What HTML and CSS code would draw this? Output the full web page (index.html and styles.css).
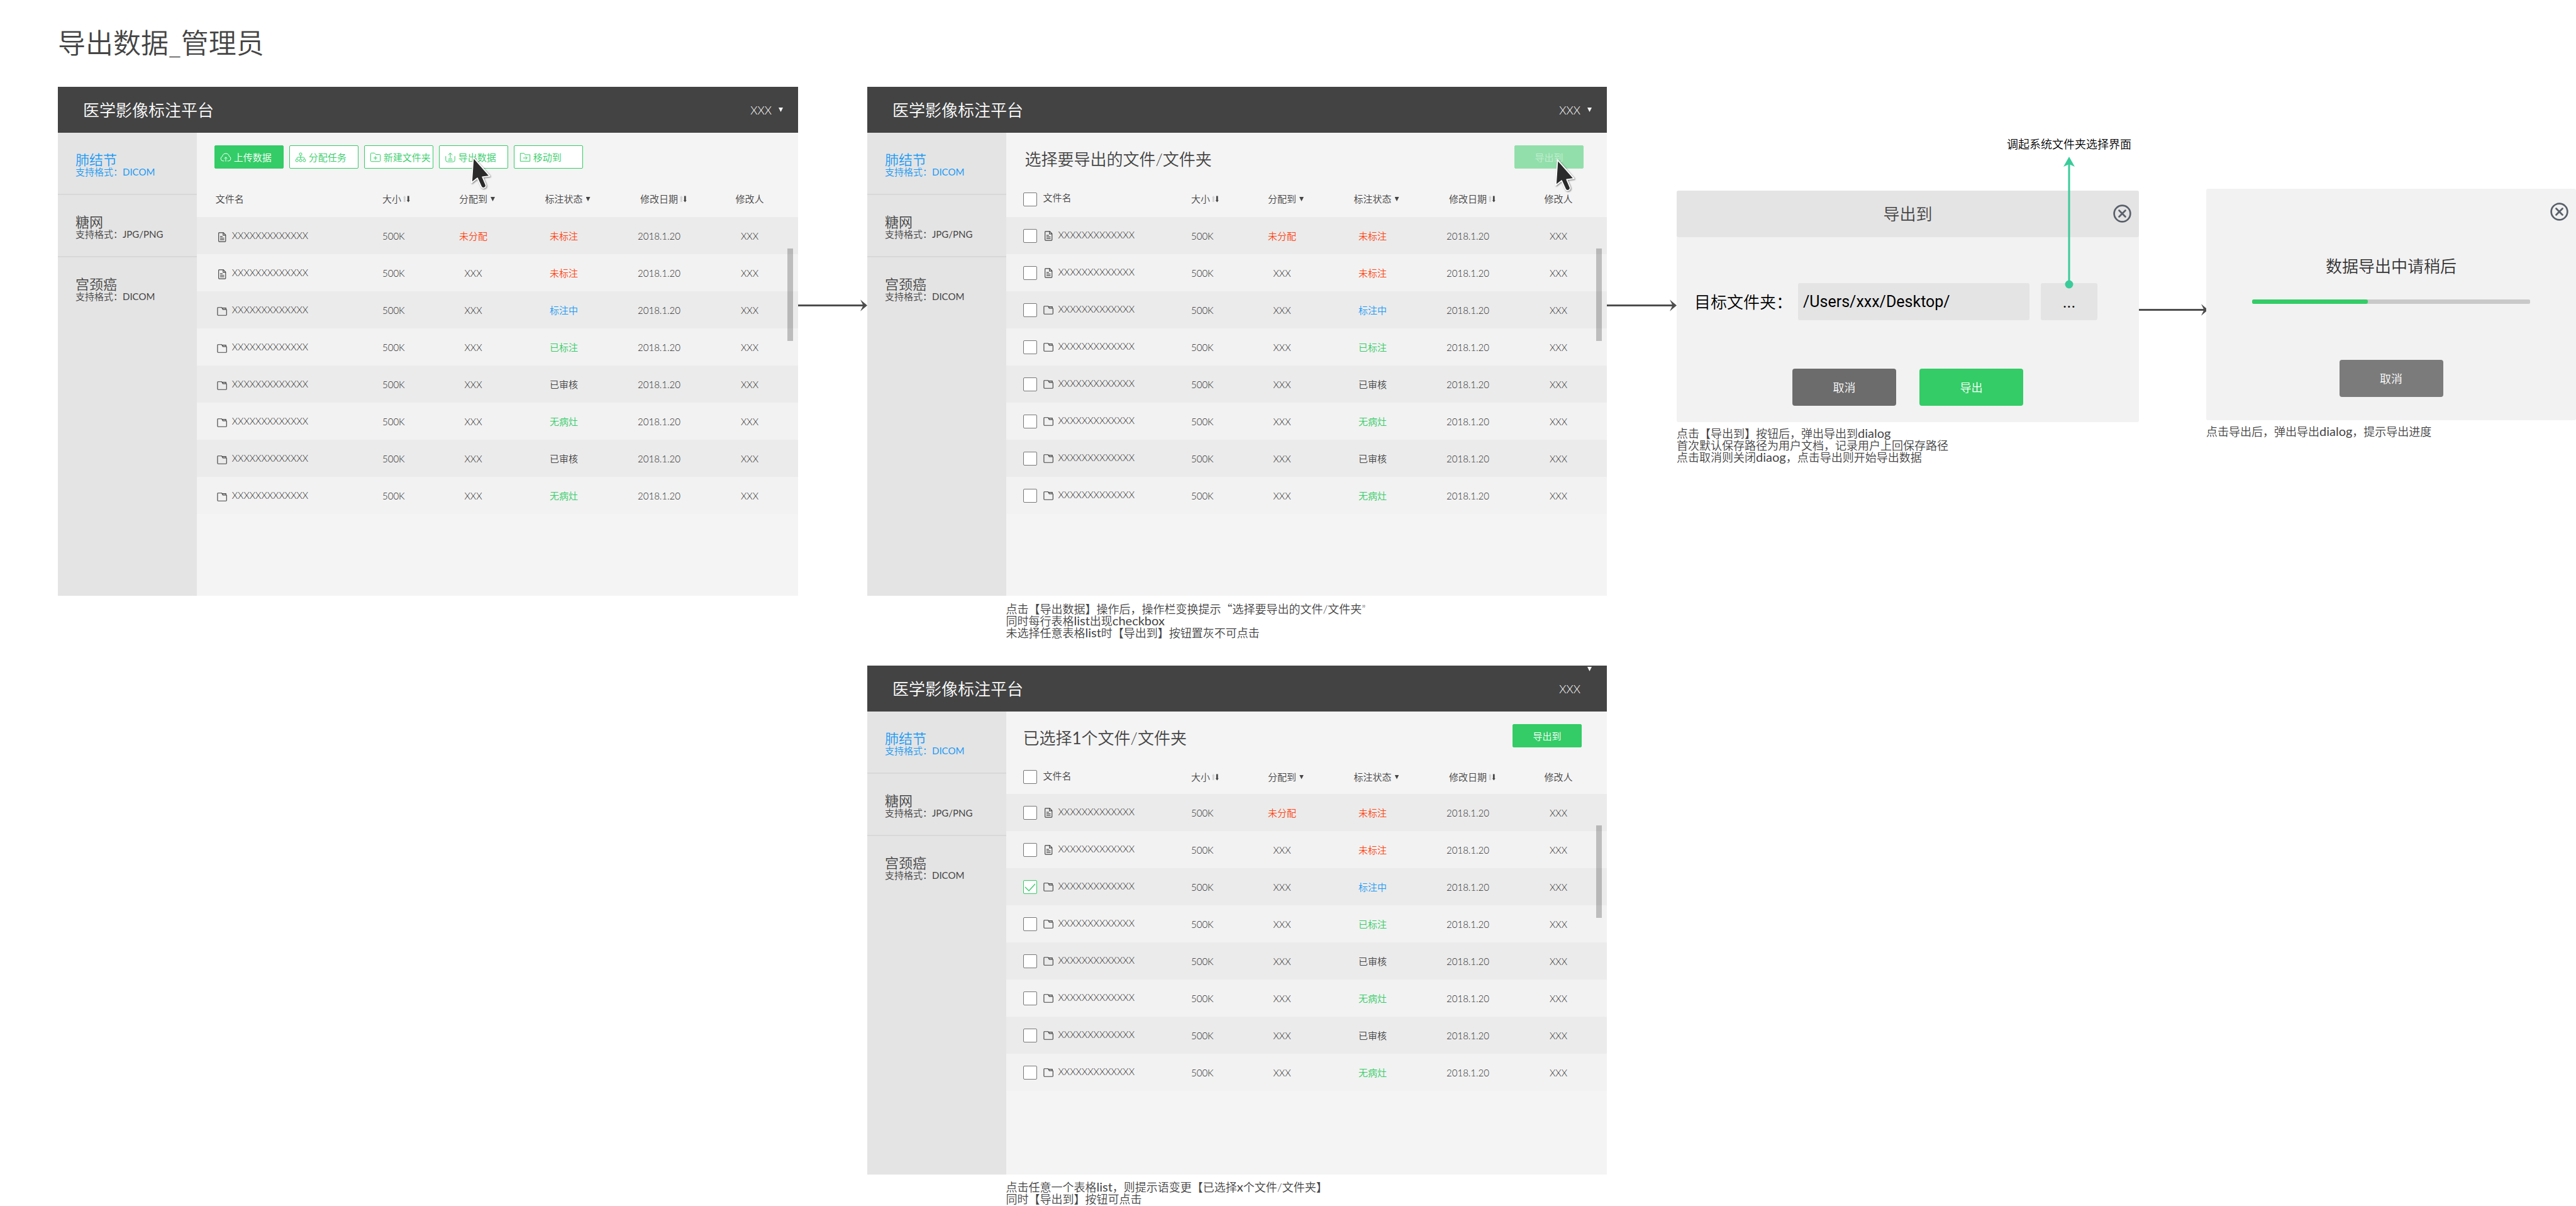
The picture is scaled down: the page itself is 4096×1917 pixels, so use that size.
FILE: index.html
```html
<!DOCTYPE html>
<html lang="zh-CN">
<head>
<meta charset="utf-8">
<title>导出数据_管理员</title>
<link rel="stylesheet" href="styles.css">
</head>
<body>
<svg class="sprite" aria-hidden="true">
  <symbol id="i-upload" viewBox="0 0 20 20"><path d="M7 16.500H4.800A4.200 4.200 0 0 1 4 8.400A6.100 6.100 0 0 1 16 8.400A4.200 4.200 0 0 1 15.200 16.500H13M10 17.500V10M7.300 12.300L10 9.700L12.700 12.300"/></symbol>
  <symbol id="i-assign" viewBox="0 0 20 20"><circle cx="10" cy="4.500" r="2.300"/><circle cx="3.500" cy="15.500" r="2.300"/><circle cx="10" cy="15.500" r="2.300"/><circle cx="16.500" cy="15.500" r="2.300"/><path d="M10 7V13M3.500 13V11.500Q3.500 10 5 10H15Q16.500 10 16.500 11.500V13"/></symbol>
  <symbol id="i-folder-add" viewBox="0 0 20 20"><path d="M1.500 4A1.500 1.500 0 0 1 3 2.500H8L10.500 5H17A1.500 1.500 0 0 1 18.500 6.500V16A1.500 1.500 0 0 1 17 17.500H3A1.500 1.500 0 0 1 1.500 16ZM10 8V14.500M6.700 11.200H13.300"/></symbol>
  <symbol id="i-export" viewBox="0 0 20 20"><path d="M2 8V15A3 3 0 0 0 5 18H15A3 3 0 0 0 18 15V8M10 11V2.500M6.500 6L10 2.500L13.500 6M7 12.500H13M6 15H14"/></symbol>
  <symbol id="i-move" viewBox="0 0 20 20"><path d="M1.500 17V3H8L10 5.500H18.500V17ZM6.500 11.200H13.500M10.700 8.200L13.700 11.200L10.700 14.200"/></symbol>
  <symbol id="i-doc" viewBox="0 0 18 18"><path d="M4 1H11.500L15.500 5V16A1 1 0 0 1 14.500 17H4A1 1 0 0 1 3 16V2A1 1 0 0 1 4 1ZM11 1V5.500H15.500M5.500 8H10M5.500 10.700H13M5.500 13.300H13"/></symbol>
  <symbol id="i-folder" viewBox="0 0 18 18"><path d="M1 3Q1 2 2 2H8.500L10.500 5.500H16.300Q17.200 5.500 17.200 6.300V15Q17.200 16 16.200 16H2Q1 16 1 15ZM9 3H16V5.500"/></symbol>
  <symbol id="i-sort" viewBox="0 0 14 12"><path fill="#d2d2d2" d="M3.500 0L6 3.500H5V11H2V3.500H1Z"/><path fill="#444" d="M8.500 0.500H11.500V8H12.700L10 11.500L7.300 8H8.500Z"/></symbol>
  <symbol id="i-close" viewBox="0 0 32 32"><circle cx="16" cy="16" r="14.200" fill="none" stroke="#59606b" stroke-width="3"/><path d="M10.500 10.500L21.500 21.500M21.500 10.500L10.500 21.500" fill="none" stroke="#59606b" stroke-width="3" stroke-linecap="round"/></symbol>
  <symbol id="i-cursor" viewBox="0 0 36 56"><path d="M5 2L2 46L12 38L18.500 52.500A4.300 4.300 0 0 0 26.500 49L21 36L33.500 34.500Z" fill="#2b2b2b" stroke="#fff" stroke-width="2" stroke-linejoin="round"/></symbol>
</svg>

<h1 class="page-title">导出数据_管理员</h1>

<main class="board">
  <section class="step">
    <div class="frame">
      <header class="topbar"><span class="brand">医学影像标注平台</span><span class="user">XXX<i class="caret"></i></span></header>
      <nav class="sidebar">
        <a class="cat active" href="#lung"><b>肺结节</b><small>支持格式：<span class="fmt">DICOM</span></small></a>
        <a class="cat" href="#retina"><b>糖网</b><small>支持格式：<span class="fmt">JPG/PNG</span></small></a>
        <a class="cat" href="#cervix"><b>宫颈癌</b><small>支持格式：<span class="fmt">DICOM</span></small></a>
      </nav>
      <div class="content">
        <div class="toolbar actions">
          <button class="btn solid"><svg><use href="#i-upload"/></svg>上传数据</button>
          <button class="btn"><svg><use href="#i-assign"/></svg>分配任务</button>
          <button class="btn"><svg><use href="#i-folder-add"/></svg>新建文件夹</button>
          <span class="hover-spot">
            <button class="btn"><svg><use href="#i-export"/></svg>导出数据</button>
            <svg class="cursor"><use href="#i-cursor"/></svg>
          </span>
          <button class="btn"><svg><use href="#i-move"/></svg>移动到</button>
        </div>
        <div class="list">
          <table class="files">
            <colgroup><col><col class="c-size"><col class="c-assign"><col class="c-status"><col class="c-date"><col class="c-user"></colgroup>
            <thead><tr><th class="name">文件名</th><th class="size">大小<svg class="sort"><use href="#i-sort"/></svg></th><th>分配到<i class="caret"></i></th><th>标注状态<i class="caret"></i></th><th>修改日期<svg class="sort"><use href="#i-sort"/></svg></th><th>修改人</th></tr></thead>
            <tbody>
              <tr><td class="name"><svg><use href="#i-doc"/></svg>XXXXXXXXXXXXX</td><td class="size">500K</td><td class="cn red">未分配</td><td class="cn red">未标注</td><td>2018.1.20</td><td>XXX</td></tr>
              <tr><td class="name"><svg><use href="#i-doc"/></svg>XXXXXXXXXXXXX</td><td class="size">500K</td><td>XXX</td><td class="cn red">未标注</td><td>2018.1.20</td><td>XXX</td></tr>
              <tr><td class="name"><svg><use href="#i-folder"/></svg>XXXXXXXXXXXXX</td><td class="size">500K</td><td>XXX</td><td class="cn blue">标注中</td><td>2018.1.20</td><td>XXX</td></tr>
              <tr><td class="name"><svg><use href="#i-folder"/></svg>XXXXXXXXXXXXX</td><td class="size">500K</td><td>XXX</td><td class="cn green">已标注</td><td>2018.1.20</td><td>XXX</td></tr>
              <tr><td class="name"><svg><use href="#i-folder"/></svg>XXXXXXXXXXXXX</td><td class="size">500K</td><td>XXX</td><td class="cn">已审核</td><td>2018.1.20</td><td>XXX</td></tr>
              <tr><td class="name"><svg><use href="#i-folder"/></svg>XXXXXXXXXXXXX</td><td class="size">500K</td><td>XXX</td><td class="cn green">无病灶</td><td>2018.1.20</td><td>XXX</td></tr>
              <tr><td class="name"><svg><use href="#i-folder"/></svg>XXXXXXXXXXXXX</td><td class="size">500K</td><td>XXX</td><td class="cn">已审核</td><td>2018.1.20</td><td>XXX</td></tr>
              <tr><td class="name"><svg><use href="#i-folder"/></svg>XXXXXXXXXXXXX</td><td class="size">500K</td><td>XXX</td><td class="cn green">无病灶</td><td>2018.1.20</td><td>XXX</td></tr>
            </tbody>
          </table>
          <div class="scroll-thumb"></div>
        </div>
      </div>
    </div>
  </section>

  <div class="flow"><svg viewBox="0 0 12 20"><path d="M0 0L12 10L0 20L5 10Z"/></svg></div>

  <section class="step">
    <div class="frame">
      <header class="topbar"><span class="brand">医学影像标注平台</span><span class="user">XXX<i class="caret"></i></span></header>
      <nav class="sidebar">
        <a class="cat active" href="#lung"><b>肺结节</b><small>支持格式：<span class="fmt">DICOM</span></small></a>
        <a class="cat" href="#retina"><b>糖网</b><small>支持格式：<span class="fmt">JPG/PNG</span></small></a>
        <a class="cat" href="#cervix"><b>宫颈癌</b><small>支持格式：<span class="fmt">DICOM</span></small></a>
      </nav>
      <div class="content">
        <div class="toolbar">
          <h2>选择要导出的文件/文件夹</h2>
          <span class="hover-spot">
            <button class="btn submit" disabled>导出到</button>
            <svg class="cursor low"><use href="#i-cursor"/></svg>
          </span>
        </div>
        <div class="list">
          <table class="files">
            <colgroup><col><col class="c-size"><col class="c-assign"><col class="c-status"><col class="c-date"><col class="c-user"></colgroup>
            <thead><tr><th class="name pick"><input type="checkbox" aria-label="全选">文件名</th><th class="size">大小<svg class="sort"><use href="#i-sort"/></svg></th><th>分配到<i class="caret"></i></th><th>标注状态<i class="caret"></i></th><th>修改日期<svg class="sort"><use href="#i-sort"/></svg></th><th>修改人</th></tr></thead>
            <tbody>
              <tr><td class="name pick"><label><input type="checkbox"><svg><use href="#i-doc"/></svg>XXXXXXXXXXXXX</label></td><td class="size">500K</td><td class="cn red">未分配</td><td class="cn red">未标注</td><td>2018.1.20</td><td>XXX</td></tr>
              <tr><td class="name pick"><label><input type="checkbox"><svg><use href="#i-doc"/></svg>XXXXXXXXXXXXX</label></td><td class="size">500K</td><td>XXX</td><td class="cn red">未标注</td><td>2018.1.20</td><td>XXX</td></tr>
              <tr><td class="name pick"><label><input type="checkbox"><svg><use href="#i-folder"/></svg>XXXXXXXXXXXXX</label></td><td class="size">500K</td><td>XXX</td><td class="cn blue">标注中</td><td>2018.1.20</td><td>XXX</td></tr>
              <tr><td class="name pick"><label><input type="checkbox"><svg><use href="#i-folder"/></svg>XXXXXXXXXXXXX</label></td><td class="size">500K</td><td>XXX</td><td class="cn green">已标注</td><td>2018.1.20</td><td>XXX</td></tr>
              <tr><td class="name pick"><label><input type="checkbox"><svg><use href="#i-folder"/></svg>XXXXXXXXXXXXX</label></td><td class="size">500K</td><td>XXX</td><td class="cn">已审核</td><td>2018.1.20</td><td>XXX</td></tr>
              <tr><td class="name pick"><label><input type="checkbox"><svg><use href="#i-folder"/></svg>XXXXXXXXXXXXX</label></td><td class="size">500K</td><td>XXX</td><td class="cn green">无病灶</td><td>2018.1.20</td><td>XXX</td></tr>
              <tr><td class="name pick"><label><input type="checkbox"><svg><use href="#i-folder"/></svg>XXXXXXXXXXXXX</label></td><td class="size">500K</td><td>XXX</td><td class="cn">已审核</td><td>2018.1.20</td><td>XXX</td></tr>
              <tr><td class="name pick"><label><input type="checkbox"><svg><use href="#i-folder"/></svg>XXXXXXXXXXXXX</label></td><td class="size">500K</td><td>XXX</td><td class="cn green">无病灶</td><td>2018.1.20</td><td>XXX</td></tr>
            </tbody>
          </table>
          <div class="scroll-thumb"></div>
        </div>
      </div>
    </div>
    <p class="note indented">点击【导出数据】操作后，操作栏变换提示<span class="cjk">“</span>选择要导出的文件/文件夹”<br>同时每行表格<span class="lat">list</span>出现<span class="lat">checkbox</span><br>未选择任意表格<span class="lat">list</span>时【导出到】按钮置灰不可点击</p>

    <div class="frame selected">
      <header class="topbar"><span class="brand">医学影像标注平台</span><span class="user">XXX<i class="caret"></i></span></header>
      <nav class="sidebar">
        <a class="cat active" href="#lung"><b>肺结节</b><small>支持格式：<span class="fmt">DICOM</span></small></a>
        <a class="cat" href="#retina"><b>糖网</b><small>支持格式：<span class="fmt">JPG/PNG</span></small></a>
        <a class="cat" href="#cervix"><b>宫颈癌</b><small>支持格式：<span class="fmt">DICOM</span></small></a>
      </nav>
      <div class="content">
        <div class="toolbar">
          <h2>已选择<span class="fmt">1</span>个文件/文件夹</h2>
          <button class="btn solid submit">导出到</button>
        </div>
        <div class="list">
          <table class="files">
            <colgroup><col><col class="c-size"><col class="c-assign"><col class="c-status"><col class="c-date"><col class="c-user"></colgroup>
            <thead><tr><th class="name pick"><input type="checkbox" aria-label="全选">文件名</th><th class="size">大小<svg class="sort"><use href="#i-sort"/></svg></th><th>分配到<i class="caret"></i></th><th>标注状态<i class="caret"></i></th><th>修改日期<svg class="sort"><use href="#i-sort"/></svg></th><th>修改人</th></tr></thead>
            <tbody>
              <tr><td class="name pick"><label><input type="checkbox"><svg><use href="#i-doc"/></svg>XXXXXXXXXXXXX</label></td><td class="size">500K</td><td class="cn red">未分配</td><td class="cn red">未标注</td><td>2018.1.20</td><td>XXX</td></tr>
              <tr><td class="name pick"><label><input type="checkbox"><svg><use href="#i-doc"/></svg>XXXXXXXXXXXXX</label></td><td class="size">500K</td><td>XXX</td><td class="cn red">未标注</td><td>2018.1.20</td><td>XXX</td></tr>
              <tr><td class="name pick"><label><input type="checkbox" checked><svg><use href="#i-folder"/></svg>XXXXXXXXXXXXX</label></td><td class="size">500K</td><td>XXX</td><td class="cn blue">标注中</td><td>2018.1.20</td><td>XXX</td></tr>
              <tr><td class="name pick"><label><input type="checkbox"><svg><use href="#i-folder"/></svg>XXXXXXXXXXXXX</label></td><td class="size">500K</td><td>XXX</td><td class="cn green">已标注</td><td>2018.1.20</td><td>XXX</td></tr>
              <tr><td class="name pick"><label><input type="checkbox"><svg><use href="#i-folder"/></svg>XXXXXXXXXXXXX</label></td><td class="size">500K</td><td>XXX</td><td class="cn">已审核</td><td>2018.1.20</td><td>XXX</td></tr>
              <tr><td class="name pick"><label><input type="checkbox"><svg><use href="#i-folder"/></svg>XXXXXXXXXXXXX</label></td><td class="size">500K</td><td>XXX</td><td class="cn green">无病灶</td><td>2018.1.20</td><td>XXX</td></tr>
              <tr><td class="name pick"><label><input type="checkbox"><svg><use href="#i-folder"/></svg>XXXXXXXXXXXXX</label></td><td class="size">500K</td><td>XXX</td><td class="cn">已审核</td><td>2018.1.20</td><td>XXX</td></tr>
              <tr><td class="name pick"><label><input type="checkbox"><svg><use href="#i-folder"/></svg>XXXXXXXXXXXXX</label></td><td class="size">500K</td><td>XXX</td><td class="cn green">无病灶</td><td>2018.1.20</td><td>XXX</td></tr>
            </tbody>
          </table>
          <div class="scroll-thumb"></div>
        </div>
      </div>
    </div>
    <p class="note indented">点击任意一个表格<span class="lat">list</span>，则提示语变更【已选择<span class="lat">x</span>个文件/文件夹】<br>同时【导出到】按钮可点击</p>
  </section>

  <div class="flow"><svg viewBox="0 0 12 20"><path d="M0 0L12 10L0 20L5 10Z"/></svg></div>

  <section class="step dialog-step">
    <div class="dialog">
      <header class="dialog-head"><span>导出到</span><button class="close" aria-label="关闭"><svg><use href="#i-close"/></svg></button></header>
      <div class="path-row">
        <label for="target">目标文件夹：</label>
        <input id="target" type="text" value="/Users/xxx/Desktop/">
        <span class="browse">
          <button class="more">...</button>
          <span class="callout">调起系统文件夹选择界面
            <svg viewBox="0 0 18 210"><path d="M9 0L18 16L9 12L0 16Z"/><path d="M7.500 9H10.500V203H7.500Z"/><circle cx="9" cy="203" r="6.500"/></svg>
          </span>
        </span>
      </div>
      <div class="dialog-actions"><button class="big">取消</button><button class="big go">导出</button></div>
    </div>
    <p class="note">点击【导出到】按钮后，弹出导出到<span class="lat">dialog</span><br>首次默认保存路径为用户文档，记录用户上回保存路径<br>点击取消则关闭<span class="lat">diaog</span>，点击导出则开始导出数据</p>
  </section>

  <div class="flow lower"><svg viewBox="0 0 12 20"><path d="M0 0L12 10L0 20L5 10Z"/></svg></div>

  <section class="step progress-step">
    <div class="dialog progress-dialog">
      <button class="close" aria-label="关闭"><svg><use href="#i-close"/></svg></button>
      <label for="export-progress">数据导出中请稍后</label>
      <progress id="export-progress" value="5" max="12"></progress>
      <button class="big muted">取消</button>
    </div>
    <p class="note">点击导出后，弹出导出<span class="lat">dialog</span>，提示导出进度</p>
  </section>
</main>
</body>
</html>
```
FILE: styles.css
```css
* { box-sizing: border-box; }

body {
  margin: 0;
  background: #fff;
  color: #444;
  font: 350 15px/20px Lato, "Noto Sans CJK SC", sans-serif;
}

button, input {
  font: inherit;
  color: inherit;
  margin: 0;
}

.sprite { display: none; }

.page-title {
  margin: 0;
  padding: 38px 92px 40px;
  font-size: 44px;
  line-height: 60px;
  font-weight: 350;
}

/* Columns: step, arrow, step, arrow, dialog, arrow, dialog */
.board {
  display: grid;
  grid-template-columns: 1177fr 110fr 1176fr 111fr 735fr 107fr 588fr;
  align-items: start;
  padding-left: 92px;
}

.step { min-width: 0; }

/* Arrows between steps */
.flow {
  display: flex;
  align-items: center;
  margin-top: 338px;
}
.flow.lower { margin: 345px -3px 0 0; }
.flow::before {
  content: "";
  flex: 1;
  height: 3px;
  margin-right: -8px;
  background: #4d4d4d;
}
.flow svg {
  width: 11px;
  height: 19px;
  fill: #4d4d4d;
}

/* Application frame */
.frame {
  display: grid;
  grid-template-columns: 3fr 13fr;
}
.topbar {
  grid-column: 1 / -1;
  display: flex;
  align-items: center;
  justify-content: space-between;
  height: 73px;
  padding: 0 24px 0 40px;
  background: #434343;
  color: #fff;
}
.brand { font-size: 26px; }
.user {
  display: flex;
  align-items: center;
  align-self: stretch;
  gap: 6px;
  font-size: 18px;
}
.caret {
  display: inline-block;
  width: 7px;
  height: 7px;
  margin: 0 -12px 0 5px;
  vertical-align: 2px;
  background: currentColor;
  clip-path: polygon(0 0, 100% 0, 50% 100%);
}
.user .caret { margin-right: 0; }
.selected .user .caret {
  align-self: flex-start;
  margin-top: 2px;
}

.sidebar { background: #e4e4e4; }
.cat {
  display: flex;
  flex-direction: column;
  height: 99px;
  padding: 33px 0 0 28px;
  border-bottom: 2px solid #d8d8d8;
  color: inherit;
  text-decoration: none;
}
.cat:last-child { border-bottom: 0; }
.cat.active { color: #1c9af5; }
.cat b {
  font-size: 22px;
  line-height: 20px;
  font-weight: 350;
}
.cat small {
  font-size: 15px;
  line-height: 18px;
}
.fmt { font-weight: 400; }

.content {
  background: #f4f4f4;
  padding-bottom: 130px;
}
.selected .content { padding-bottom: 133px; }

.toolbar {
  display: flex;
  justify-content: space-between;
  align-items: flex-start;
  height: 76px;
  padding: 20px 37px 0 30px;
}
.selected .toolbar { padding: 20px 40px 0 27px; }
.toolbar h2 {
  margin: 0;
  font-size: 26px;
  line-height: 44px;
  font-weight: 350;
}
.toolbar.actions {
  justify-content: flex-start;
  gap: 9px;
  padding-left: 28px;
}
.btn {
  display: flex;
  align-items: center;
  gap: 4px;
  width: 110px;
  height: 37px;
  padding: 0 0 0 8px;
  border: 1px solid #33cc66;
  border-radius: 2px;
  background: #fff;
  color: #33cc66;
  white-space: nowrap;
}
.btn svg {
  flex: none;
  width: 18px;
  height: 18px;
  fill: none;
  stroke: currentColor;
  stroke-width: 1.1;
}
.btn.solid {
  background: #33cc66;
  color: #fff;
}
.btn.submit {
  justify-content: center;
  padding: 0;
}
.btn:disabled {
  background: #92dfab;
  border-color: #92dfab;
  color: #c3eecf;
}
.hover-spot { position: relative; }
.cursor {
  position: absolute;
  left: 50px;
  top: 17px;
  width: 33px;
  height: 52px;
  filter: drop-shadow(1px 1px 1px rgba(0, 0, 0, .5));
}
.cursor.low {
  left: 64px;
  top: 21px;
}

/* File table */
.list { position: relative; }
.files {
  width: 100%;
  table-layout: fixed;
  border-collapse: collapse;
}
.c-size { width: 73px; }
.c-assign { width: 143px; }
.c-status { width: 145px; }
.c-date { width: 158px; }
.c-user { width: 142px; }
th, td {
  height: 59px;
  padding: 0;
  text-align: center;
}
th {
  height: 58px;
  font-weight: 350;
}
td {
  font-weight: 300;
  color: #2b2b2b;
}
td:last-child, th:last-child { padding-right: 12px; }
.selected th { height: 55px; }
tbody tr:nth-child(odd) { background: #ebebeb; }
tbody tr:nth-child(even) { background: #f2f2f2; }
.name, .size { text-align: left; }
th.name { padding-left: 30px; }
td.name { padding-left: 32px; }
.name.pick { padding-left: 27px; }
.name svg {
  width: 16px;
  height: 16px;
  margin-right: 8px;
  vertical-align: middle;
  fill: none;
  stroke: #444;
  stroke-width: 1.3;
}
.name input {
  appearance: none;
  width: 22px;
  height: 22px;
  margin: 0 10px 0 0;
  vertical-align: middle;
  border: 1px solid #777;
  border-radius: 2px;
  background: #fff;
}
.name input:checked {
  border-color: #33cc66;
  background: #fff url("data:image/svg+xml,%3Csvg xmlns='http://www.w3.org/2000/svg' viewBox='0 0 20 20'%3E%3Cpath d='M2 10L8 16L18 5' fill='none' stroke='%2333cc66' stroke-width='1.300'/%3E%3C/svg%3E");
}
.sort {
  width: 13px;
  height: 11px;
  margin: 0 -15px 0 2px;
}
.cn {
  font-weight: 350;
  color: #444;
}
.red { color: #ff4412; }
.blue { color: #1c9af5; }
.green { color: #33cc66; }
.scroll-thumb {
  position: absolute;
  right: 8px;
  top: 108px;
  width: 9px;
  height: 147px;
  background: rgba(0, 0, 0, .22);
}
.selected .scroll-thumb { top: 105px; }

/* Annotations */
.note {
  margin: 9px 0 0;
  font-size: 18px;
  line-height: 19px;
}
.note.indented {
  margin-top: 11px;
  padding-left: 18.75%;
}
.note + .frame { margin-top: 42px; }
.cjk { font-family: "Noto Sans CJK SC", sans-serif; }
.lat {
  font-size: 20px;
  line-height: 1px;
  font-weight: 400;
}

/* Dialogs */
.dialog-step { margin-top: 165px; }
.progress-step {
  position: relative;
  margin-top: 162px;
}
.dialog {
  border-radius: 3px;
  background: #f2f2f2;
}
.dialog-head {
  position: relative;
  display: flex;
  align-items: center;
  justify-content: center;
  height: 74px;
  border-radius: 3px;
  background: #e4e4e4;
  font-size: 26px;
}
.close {
  position: absolute;
  right: 12px;
  top: 22px;
  width: 29px;
  height: 29px;
  padding: 0;
  border: 0;
  background: none;
}
.close svg {
  display: block;
  width: 29px;
  height: 29px;
}
.path-row {
  display: flex;
  align-items: center;
  padding: 73px 66px 0 28px;
  color: #000;
  font-size: 26px;
}
.path-row label { width: 165px; }
.path-row input {
  flex: 1;
  min-width: 0;
  height: 59px;
  padding: 0 8px;
  border: 0;
  border-radius: 3px;
  background: #e4e4e4;
  font-family: Roboto, sans-serif;
  font-size: 25px;
  font-weight: 400;
}
.browse {
  position: relative;
  margin-left: 18px;
}
.more {
  display: block;
  width: 90px;
  height: 59px;
  border: 0;
  border-radius: 3px;
  background: #e4e4e4;
  font-family: Roboto, sans-serif;
  font-weight: 400;
}
.callout {
  position: absolute;
  left: 50%;
  bottom: calc(100% - 9px);
  transform: translateX(-50%);
  display: flex;
  flex-direction: column;
  align-items: center;
  gap: 8px;
  font-size: 18px;
  line-height: 24px;
  white-space: nowrap;
}
.callout svg {
  width: 18px;
  height: 210px;
  fill: #3acb9b;
}
.dialog-actions {
  display: flex;
  justify-content: center;
  gap: 37px;
  padding: 77px 0 26px;
}
.big {
  width: 165px;
  height: 59px;
  border: 0;
  border-radius: 4px;
  background: #6c6c6c;
  color: #fff;
  font-size: 18px;
}
.big.go { background: #33cc66; }
.big.muted { background: #7b7b7b; }

.progress-dialog {
  position: relative;
  display: flex;
  flex-direction: column;
  align-items: center;
  padding: 106px 73px 37px;
}
.progress-dialog label {
  color: #333;
  font-size: 26px;
  line-height: 34px;
}
progress {
  appearance: none;
  width: 100%;
  height: 7px;
  margin: 36px 0 89px;
  border: 0;
  border-radius: 3px;
  background: #c9c9c9;
}
progress::-webkit-progress-bar {
  border-radius: 3px;
  background: #c9c9c9;
}
progress::-webkit-progress-value {
  border-radius: 3px;
  background: #33cc66;
}
```
